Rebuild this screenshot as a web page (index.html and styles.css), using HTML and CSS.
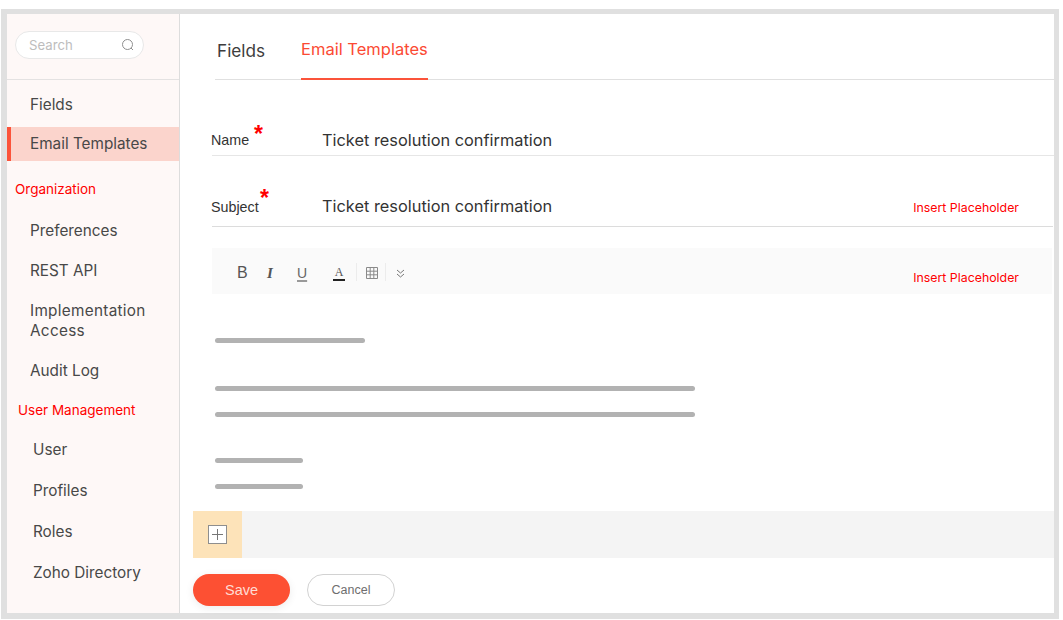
FILE: index.html
```html
<!DOCTYPE html>
<html lang="en">
<head>
<meta charset="utf-8">
<title>Email Templates</title>
<link rel="stylesheet" href="styles.css">
</head>
<body>
<div class="frame">
  <aside class="sidebar">
    <div class="search-wrap">
      <div class="search">
        <span class="search-text">Search</span>
        <svg class="search-icon" width="14" height="14" viewBox="0 0 14 14" fill="none" stroke="#8f8f8f" stroke-width="1"><circle cx="6.5" cy="6.5" r="5"/><path d="M10 10l2 2"/></svg>
      </div>
    </div>
    <nav class="nav">
      <div class="item first">Fields</div>
      <div class="item active">Email Templates</div>
      <div class="heading org">Organization</div>
      <div class="item pref">Preferences</div>
      <div class="item">REST API</div>
      <div class="item wide">Implementation<br>Access</div>
      <div class="item">Audit Log</div>
      <div class="heading um">User Management</div>
      <div class="item sub user">User</div>
      <div class="item sub gap21">Profiles</div>
      <div class="item sub gap21">Roles</div>
      <div class="item sub gap21">Zoho Directory</div>
    </nav>
  </aside>
  <main class="main">
    <div class="tabs">
      <span class="tab">Fields</span>
      <span class="tab tab-on">Email Templates</span>
    </div>
    <div class="row row-name">
      <span class="label label-name">Name<span class="star star-name">*</span></span>
      <span class="value">Ticket resolution confirmation</span>
    </div>
    <div class="row row-subject">
      <span class="label">Subject<span class="star star-subject">*</span></span>
      <span class="value">Ticket resolution confirmation</span>
      <span class="insert">Insert Placeholder</span>
    </div>
    <div class="toolbar">
      <span class="tool tool-b">B</span>
      <span class="tool tool-i">I</span>
      <span class="tool tool-u">U</span>
      <span class="tool tool-a">A</span>
      <span class="sep"></span>
      <svg class="tool-table" width="12" height="12" viewBox="0 0 12 12" fill="none" stroke="#8a8a8a" stroke-width="1"><path d="M.5.5h11v11H.5zM.5 4.2h11M.5 7.8h11M4.2.5v11M7.8.5v11"/></svg>
      <span class="sep sep2"></span>
      <svg class="tool-more" width="9" height="9" viewBox="0 0 9 9" fill="none" stroke="#777" stroke-width="1"><path d="M1 1l3.5 3L8 1M1 5l3.5 3L8 5"/></svg>
      <span class="insert insert-tool">Insert Placeholder</span>
    </div>
    <div class="body">
      <div class="line l150"></div>
      <div class="line l480 g1"></div>
      <div class="line l480 g2"></div>
      <div class="line l89 g3"></div>
      <div class="line l89 g2"></div>
    </div>
    <div class="attach">
      <div class="attach-btn">
        <svg width="19" height="19" viewBox="0 0 19 19" fill="#fff" stroke="#8e8e8e" stroke-width="1"><rect x=".5" y=".5" width="18" height="18"/><path d="M4 9.5h11M9.5 4v11" stroke="#777"/></svg>
      </div>
    </div>
    <div class="actions">
      <button class="btn save">Save</button>
      <button class="btn cancel">Cancel</button>
    </div>
  </main>
</div>
</body>
</html>
```
FILE: styles.css
```css
* { box-sizing: border-box; }
html, body { margin: 0; padding: 0; background: #fff; }
body { width: 1063px; height: 620px; overflow: hidden; font-family: Inter, "Liberation Sans", sans-serif; color: #3d3d3d; }
.frame { display: flex; width: 1058px; height: 610px; margin: 9px 0 0 1px; border: solid #e0e0e0; border-width: 5px 5px 6px 6px; background: #fff; }
.sidebar { width: 173px; flex: none; background: #fef8f7; border-right: 1px solid #ddd; }
.search-wrap { height: 66px; padding: 17px 0 0 8px; border-bottom: 1px solid #e4e2e2; }
.search { display: flex; align-items: center; justify-content: space-between; width: 129px; height: 28px; padding: 0 8px 0 13px; background: #fff; border: 1px solid #e8e8e8; border-radius: 14px; }
.search-text { font-size: 13.2px; color: #bdbdbd; }
.search-icon { display: block; }
.nav { display: flex; flex-direction: column; }
.item { margin-top: 20px; padding-left: 23px; font-size: 15.3px; line-height: 20px; color: #484848; }
.item.wide { letter-spacing: .3px; }
.item.first { margin-top: 15px; }
.item.active { margin-top: 12px; height: 34px; line-height: 34px; background: #fbd4cc; border-left: 4px solid #fb533a; padding-left: 19px; }
.item.pref { margin-top: 22px; }
.item.sub { padding-left: 26px; }
.item.user { margin-top: 20px; }
.item.gap21 { margin-top: 21px; }
.heading { font-size: 13.5px; line-height: 20px; color: #f00; }
.heading.org { margin-top: 18px; padding-left: 8px; }
.heading.um { margin-top: 19px; padding-left: 11px; }
.main { flex: 1; min-width: 0; display: flex; flex-direction: column; }
.tabs { display: flex; gap: 36px; height: 66px; margin-left: 35px; padding-left: 2px; border-bottom: 1px solid #e0e0e0; }
.tab { padding-top: 27px; font-size: 17.2px; line-height: 20px; color: #3d3d3d; }
.tab-on { margin-bottom: -1px; padding-top: 25px; font-size: 16.5px; color: #fb4a33; border-bottom: 2px solid #fb533a; width: 127px; white-space: nowrap; }
.row { position: relative; display: flex; align-items: flex-end; margin-left: 32px; border-bottom: 1px solid #e6e6e6; }
.row-name { height: 76px; padding-bottom: 4px; }
.row-subject { height: 71px; padding-bottom: 9px; margin-right: 1px; border-bottom-color: #dcdcdc; }
.label { position: relative; width: 111px; margin-left: -1px; font-size: 14.3px; line-height: 20px; color: #333; font-family: "Liberation Sans", sans-serif; }
.label-name { margin-bottom: 1px; }
.star { position: absolute; color: #f00; font-size: 23px; font-weight: bold; line-height: 22px; font-family: "Liberation Sans", sans-serif; }
.star-name { left: 43px; top: -7px; }
.star-subject { left: 49px; top: -10px; }
.value { font-size: 16.35px; line-height: 22px; color: #333; }
.insert { position: absolute; right: 34px; bottom: 10px; font-size: 12.35px; line-height: 16px; color: #f00; }
.toolbar { position: relative; display: flex; align-items: center; height: 46px; margin: 21px 2px 0 32px; padding: 4px 0 0 25px; background: #fafafa; }
.insert-tool { right: 33px; bottom: 8px; }
.tool { display: block; flex: none; font-family: "Liberation Sans", sans-serif; color: #555; line-height: 16px; }
.tool-b { font-size: 16px; width: 30px; }
.tool-i { font-family: "Liberation Serif", serif; font-style: italic; font-weight: bold; font-size: 15px; width: 30px; }
.tool-u { font-size: 14px; width: 36px; text-decoration: underline #999 2px; text-underline-offset: 2px; color: #666; }
.tool-a { font-size: 12px; width: 12px; border-bottom: 2px solid #222; line-height: 13px; text-align: center; font-family: "Liberation Serif", serif; margin-top: 1px; }
.sep { width: 1px; height: 18px; margin: 0 0 3px 11px; background: #ececec; }
.tool-table { margin-left: 9px; display: block; }
.sep2 { margin-left: 7px; }
.tool-more { margin-left: 10px; display: block; }
.body { height: 217px; margin-left: 35px; padding-top: 44px; }
.line { height: 5px; background: #b2b2b2; border-radius: 3px; }
.l150 { width: 150px; }
.l480 { width: 480px; }
.l89 { width: 88px; }
.g1 { margin-top: 43px; }
.g2 { margin-top: 21px; }
.g3 { margin-top: 41px; }
.attach { height: 47px; margin-left: 13px; background: #f4f4f4; }
.attach-btn { display: flex; align-items: center; justify-content: center; width: 49px; height: 47px; background: #fde3b9; }
.actions { display: flex; gap: 17px; margin: 16px 0 0 13px; }
.btn { height: 32px; border-radius: 16px; font-family: "Liberation Sans", sans-serif; padding: 0; }
.save { width: 97px; background: #fd5033; border: 0; color: #ffdcd4; font-size: 14.5px; box-shadow: 0 2px 8px rgba(0,0,0,.08); }
.cancel { width: 88px; background: #fff; border: 1px solid #d2d2d2; color: #6e6e6e; font-size: 12.5px; }
```
